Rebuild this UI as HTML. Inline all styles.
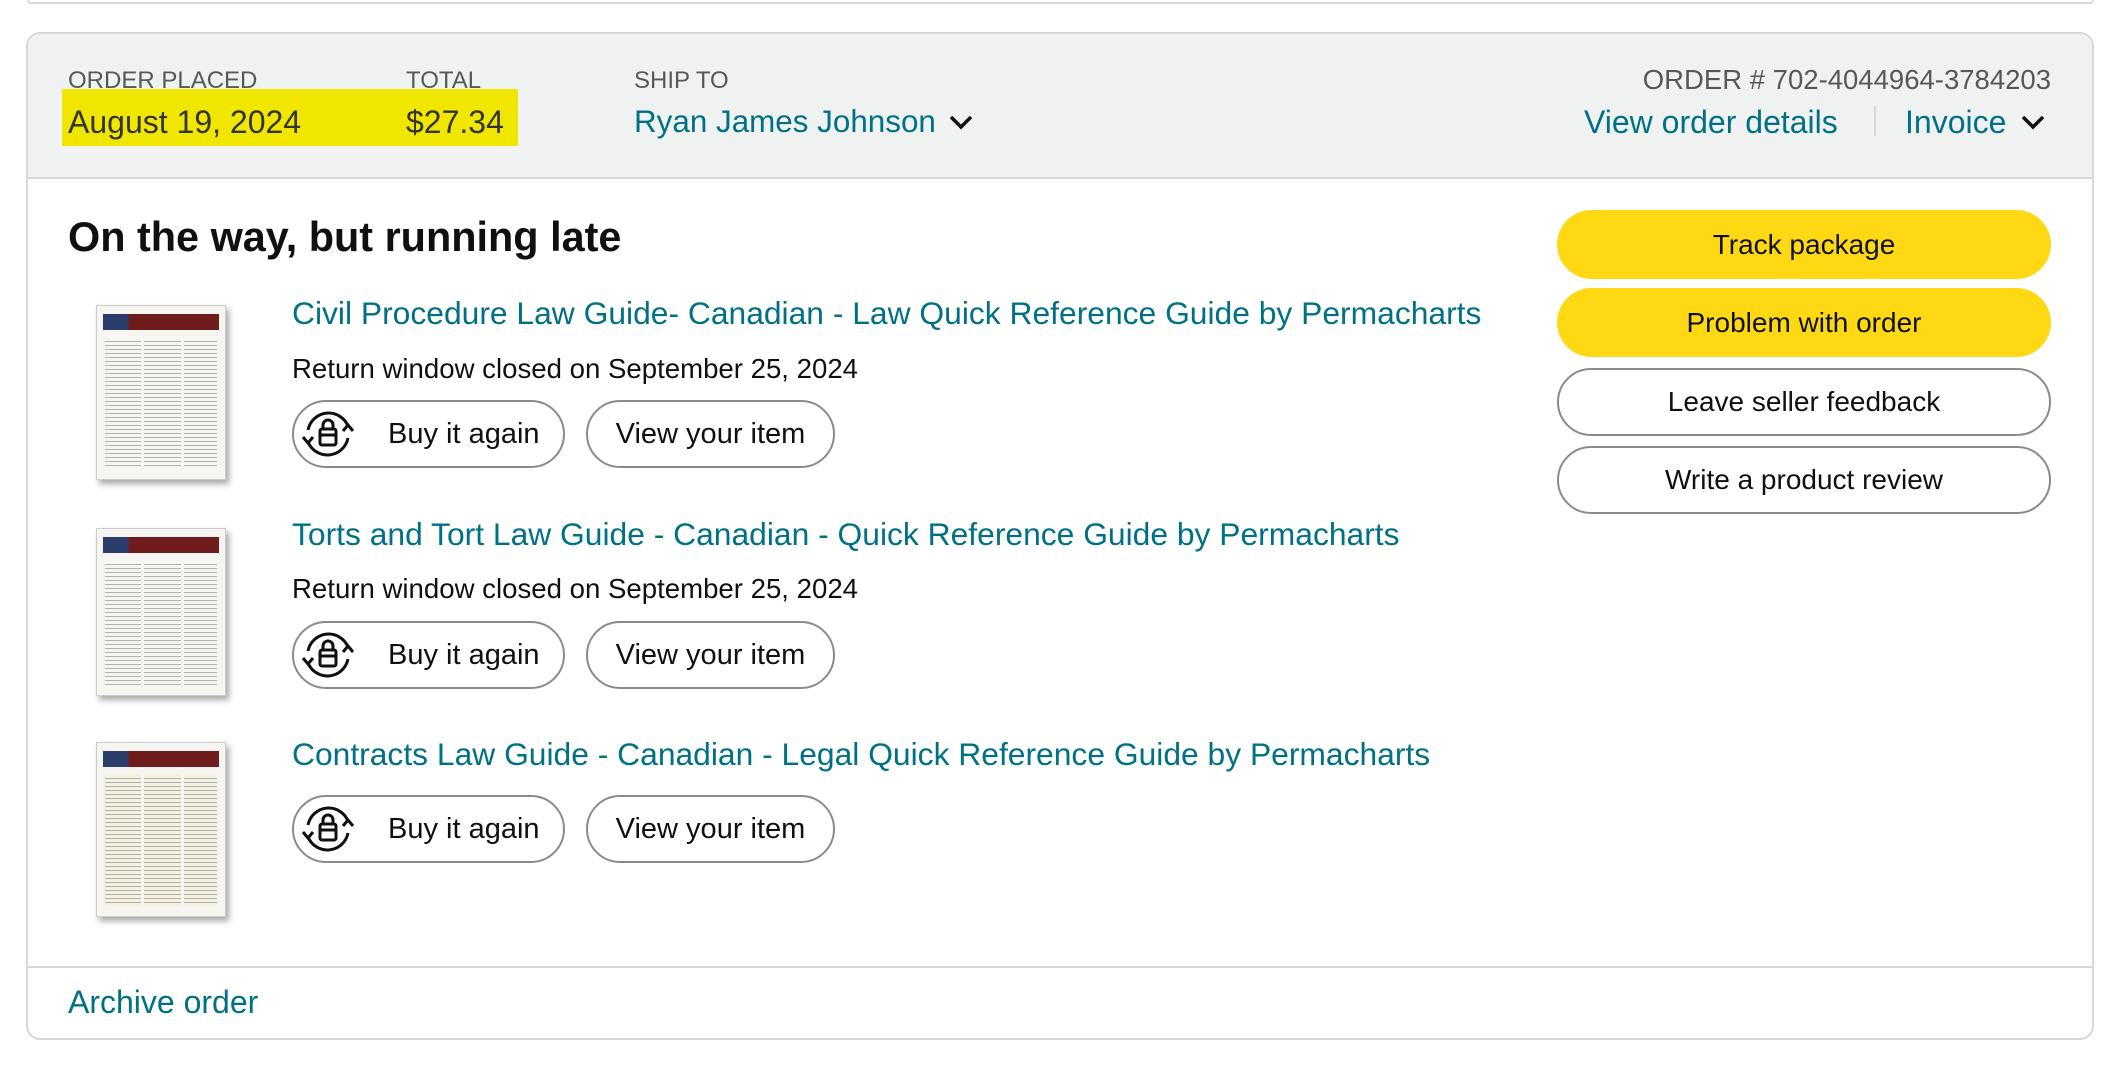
<!DOCTYPE html>
<html><head><meta charset="utf-8"><style>
*{box-sizing:border-box;margin:0;padding:0}
body{width:2121px;height:1068px;background:#fff;font-family:"Liberation Sans",Arial,sans-serif;color:#0f1111;position:relative;overflow:hidden}
.a{position:absolute;white-space:nowrap}
.lbl{font-size:24px;color:#565959;line-height:30px}
.val{font-size:32px;line-height:36px}
.link{color:#007185}
.card{position:absolute;left:26px;top:32px;width:2068px;height:1008px;border:2px solid #d5d9d9;border-radius:14px;overflow:hidden}
.hdr{position:absolute;left:0;top:0;right:0;height:145px;background:#f0f2f2;border-bottom:2px solid #d5d9d9}
.btn{position:absolute;border-radius:40px;font-size:28px;display:flex;align-items:center;justify-content:center;line-height:1}
.y{background:#ffd814}
.o{border:2px solid #888c8c;background:#fff}
.pill{position:absolute;height:68px;border:2px solid #888c8c;border-radius:34px;font-size:29px;display:flex;align-items:center}
.book{position:absolute;width:130px;background:#f6f5f2;box-shadow:3px 4px 6px rgba(0,0,0,.35);border:1px solid #ccc}
.book .h{position:absolute;left:6px;right:6px;top:8px;height:16px;background:linear-gradient(90deg,#2b3d6b 0 22%,#6e1c1c 22%)}
.book .t{position:absolute;left:8px;right:8px;top:32px;bottom:10px;background:repeating-linear-gradient(#f6f5f2 0 3px,#9a9a9a 3px 4px);opacity:.75}
.book .t2{position:absolute;left:44px;top:32px;bottom:10px;width:3px;background:#f6f5f2}
.book .t3{position:absolute;left:84px;top:32px;bottom:10px;width:3px;background:#f6f5f2}
.title{font-size:31.8px;line-height:36px}
</style></head><body>
<div class="a" style="left:27px;top:0;width:2067px;height:4px;border:2px solid #d5d9d9;border-top:none;border-radius:0 0 10px 10px"></div>
<div class="card">
 <div class="hdr"></div>
 <div style="position:absolute;left:0;right:0;top:932px;border-top:2px solid #d5d9d9"></div>
</div>
<div class="a" style="left:62px;top:89px;width:456px;height:57px;background:#f0e600"></div>
<div class="a lbl" style="left:68px;top:66px">ORDER PLACED</div>
<div class="a lbl" style="left:406px;top:66px">TOTAL</div>
<div class="a lbl" style="left:634px;top:66px">SHIP TO</div>
<div class="a val" style="left:68px;top:104px;color:#333">August 19, 2024</div>
<div class="a val" style="left:406px;top:104px;color:#333">$27.34</div>
<div class="a val link" style="left:634px;top:104px;font-size:31.4px">Ryan James Johnson</div>
<svg class="a" style="left:948px;top:113px" width="26" height="18" viewBox="0 0 26 18"><path d="M3 4l10 10 10-10" fill="none" stroke="#0f1111" stroke-width="3.5"/></svg>
<div class="a lbl" style="right:70px;top:65px;font-size:27.5px">ORDER # 702-4044964-3784203</div>
<div class="a val link" style="left:1584px;top:104px">View order details</div>
<div class="a" style="left:1874px;top:106px;width:2px;height:30px;background:#d5d9d9"></div>
<div class="a val link" style="left:1905px;top:104px">Invoice</div>
<svg class="a" style="left:2020px;top:113px" width="26" height="18" viewBox="0 0 26 18"><path d="M3 4l10 10 10-10" fill="none" stroke="#0f1111" stroke-width="3.5"/></svg>

<div class="a" style="left:68px;top:213px;font-size:41.4px;font-weight:bold;line-height:48px">On the way, but running late</div>

<div class="btn y" style="left:1557px;top:210px;width:494px;height:69px">Track package</div>
<div class="btn y" style="left:1557px;top:288px;width:494px;height:69px">Problem with order</div>
<div class="btn o" style="left:1557px;top:368px;width:494px;height:68px">Leave seller feedback</div>
<div class="btn o" style="left:1557px;top:446px;width:494px;height:68px">Write a product review</div>

<div class="book" style="left:96px;top:305px;height:175px"><div class="h"></div><div class="t"></div><div class="t2"></div><div class="t3"></div></div>
<div class="book" style="left:96px;top:528px;height:168px"><div class="h"></div><div class="t"></div><div class="t2"></div><div class="t3"></div></div>
<div class="book" style="left:96px;top:742px;height:175px"><div class="h"></div><div class="t" style="background:repeating-linear-gradient(#f4efd8 0 3px,#9a9a9a 3px 4px)"></div><div class="t2"></div><div class="t3"></div></div>

<div class="a title link" style="left:292px;top:295px">Civil Procedure Law Guide- Canadian - Law Quick Reference Guide by Permacharts</div>
<div class="a" style="left:292px;top:353px;font-size:27.6px;line-height:32px">Return window closed on September 25, 2024</div>
<div class="a title link" style="left:292px;top:516px">Torts and Tort Law Guide - Canadian - Quick Reference Guide by Permacharts</div>
<div class="a" style="left:292px;top:573px;font-size:27.6px;line-height:32px">Return window closed on September 25, 2024</div>
<div class="a title link" style="left:292px;top:736px">Contracts Law Guide - Canadian - Legal Quick Reference Guide by Permacharts</div>

<div class="pill" style="left:292px;top:400px;width:273px"><svg style="margin-left:4px" width="60" height="60" viewBox="0 0 60 60"><g fill="none" stroke="#0f1111" stroke-width="3"><path d="M10 26A21 21 0 0 1 50 22"/><path d="M50 34A21 21 0 0 1 10 38"/><path d="M5 33l5 6 5-6"/><path d="M45 27l5-6 5 6"/><rect x="22" y="25" width="16" height="16" rx="2"/><path d="M25 25v-4a5 5 0 0 1 10 0v4M22 31h16"/></g></svg><span style="margin-left:30px">Buy it again</span></div>
<div class="pill" style="left:586px;top:400px;width:249px;justify-content:center">View your item</div>
<div class="pill" style="left:292px;top:621px;width:273px"><svg style="margin-left:4px" width="60" height="60" viewBox="0 0 60 60"><g fill="none" stroke="#0f1111" stroke-width="3"><path d="M10 26A21 21 0 0 1 50 22"/><path d="M50 34A21 21 0 0 1 10 38"/><path d="M5 33l5 6 5-6"/><path d="M45 27l5-6 5 6"/><rect x="22" y="25" width="16" height="16" rx="2"/><path d="M25 25v-4a5 5 0 0 1 10 0v4M22 31h16"/></g></svg><span style="margin-left:30px">Buy it again</span></div>
<div class="pill" style="left:586px;top:621px;width:249px;justify-content:center">View your item</div>
<div class="pill" style="left:292px;top:795px;width:273px"><svg style="margin-left:4px" width="60" height="60" viewBox="0 0 60 60"><g fill="none" stroke="#0f1111" stroke-width="3"><path d="M10 26A21 21 0 0 1 50 22"/><path d="M50 34A21 21 0 0 1 10 38"/><path d="M5 33l5 6 5-6"/><path d="M45 27l5-6 5 6"/><rect x="22" y="25" width="16" height="16" rx="2"/><path d="M25 25v-4a5 5 0 0 1 10 0v4M22 31h16"/></g></svg><span style="margin-left:30px">Buy it again</span></div>
<div class="pill" style="left:586px;top:795px;width:249px;justify-content:center">View your item</div>

<div class="a val link" style="left:68px;top:984px">Archive order</div>
</body></html>
